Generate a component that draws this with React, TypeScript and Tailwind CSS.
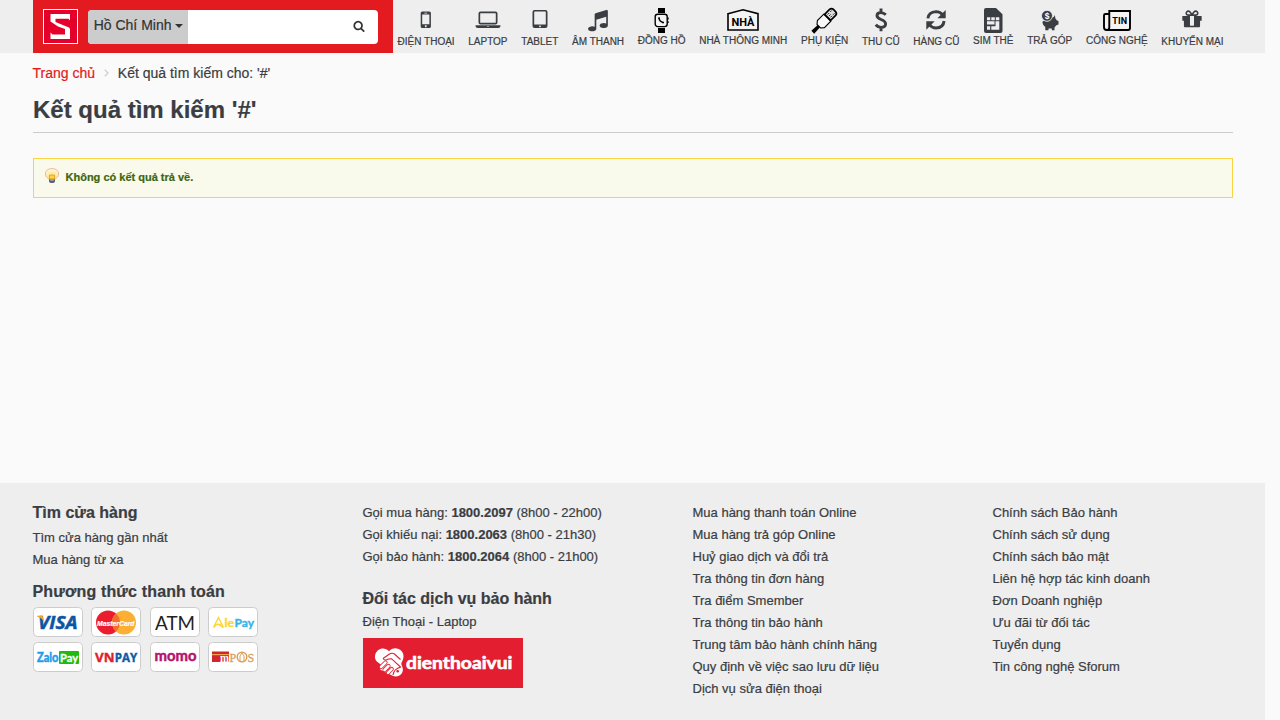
import type { ReactNode } from "react";

const SEARCH =
  "M1216 832q0-185-131.5-316.5t-316.5-131.5-316.5 131.5-131.5 316.5 131.5 316.5 316.5 131.5 316.5-131.5 131.5-316.5zm512 832q0 52-38 90t-90 38q-54 0-90-38l-343-342q-179 124-399 124-143 0-273.5-55.5t-225-150-150-225-55.5-273.5 55.5-273.5 150-225 225-150 273.5-55.5 273.5 55.5 225 150 150 225 55.5 273.5q0 220-124 399l343 343q37 37 37 90z";
const MUSIC =
  "M1664 224v1120q0 50-34 89t-86 60.5-103.5 32-96.5 10.5-96.5-10.5-103.5-32-86-60.5-34-89 34-89 86-60.5 103.5-32 96.5-10.5q105 0 192 39v-537l-768 237v709q0 50-34 89t-86 60.5-103.5 32-96.5 10.5-96.5-10.5-103.5-32-86-60.5-34-89 34-89 86-60.5 103.5-32 96.5-10.5q105 0 192 39v-967q0-31 19-56.5t49-35.5l832-256q12-4 28-4 40 0 68 28t28 68z";
const GIFT =
  "M1056 1356v-716h-320v716q0 25 18 38.5t46 13.5h192q28 0 46-13.5t18-38.5zm-456-844h195l-126-161q-26-31-69-31-40 0-68 28t-28 68 28 68 68 28zm688-96q0-40-28-68t-68-28q-43 0-69 31l-125 161h194q40 0 68-28t28-68zm376 256v320q0 14-9 23t-23 9h-96v416q0 40-28 68t-68 28h-1088q-40 0-68-28t-28-68v-416h-96q-14 0-23-9t-9-23v-320q0-14 9-23t23-9h440q-93 0-158.5-65.5t-65.5-158.5 65.5-158.5 158.5-65.5q107 0 168 77l128 165 128-165q61-77 168-77 93 0 158.5 65.5t65.5 158.5-65.5 158.5-158.5 65.5h440q14 0 23 9t9 23z";

function Draw({ w, children }: { w: number; children: ReactNode }) {
  return (
    <svg width={w} height="34" viewBox={`0 0 ${w} 34`} fill="#3a3d42" className="block shrink-0">
      {children}
    </svg>
  );
}

const phone = (
  <Draw w={12}>
    <path fillRule="evenodd" d="M2.3 11.5h7q1.6 0 1.6 1.6v13.3q0 1.6-1.6 1.6h-7Q.7 28 .7 26.400V13.100q0-1.600 1.600-1.600zM2.200 14.400v9.800h7.200v-9.800zM4.400 12.800v.6h2.800v-.6zM5.800 25.200a.95.95 0 1 0 .01 0z" />
  </Draw>
);
const laptop = (
  <Draw w={26}>
    <path fillRule="evenodd" d="M5.500 11.500h15q2 0 2 2v9q0 2-2 2h-15q-2 0-2-2v-9q0-2 2-2zM5.600 13.200q-.4 0-.4.4v8.800q0 .4.4.4h14.800q.4 0 .4-.4v-8.800q0-.4-.4-.4zM.6 25.300h24.800v1.200q0 1.400-2.200 1.400H2.800Q.6 27.900.6 26.500zM12 26v.6h2V26z" />
  </Draw>
);
const tablet = (
  <Draw w={16}>
    <path fillRule="evenodd" d="M2.500 10h11q2 0 2 2v14q0 2-2 2h-11q-2 0-2-2V12q0-2 2-2zM2.600 11.600q-.4 0-.4.4v12.200q0 .4.4.4h10.800q.4 0 .4-.4V12q0-.4-.4-.4zM8 25.400a.9.9 0 1 0 .01 0z" />
  </Draw>
);
const music = (
  <Draw w={22}>
    <path transform="translate(-.6 8.200) scale(.01290)" d={MUSIC} />
  </Draw>
);
const watch = (
  <Draw w={16}>
    <path fill="#000" d="M4 8h7v5H4zM4 28h7v5H4z" />
    <rect x="1.200" y="14.200" width="12" height="12.400" rx="2.500" fill="#f4f4f4" stroke="#000" strokeWidth="1.400" />
    <path fill="#000" d="M13.500 17.600h1.200v1.800h-1.200zM13.500 21.300h1.200v1.800h-1.200z" />
    <path d="M5 18.200q.4 3.500 4.300 4.400" fill="none" stroke="#000" strokeWidth="1.400" />
    <path d="M4.300 17.200h1.500v1.700H4.300zM8.300 21.800H10v1.400H8.300z" fill="#000" />
  </Draw>
);
const house = (
  <Draw w={32}>
    <path d="M1 13.700 16 9.800 31 13.700V30H1z" fill="#f4f4f4" stroke="#000" strokeWidth="1.600" />
    <text x="4.500" y="26" fill="#000" fontSize="11" fontWeight="700" fontFamily="Roboto" textLength="23">NHÀ</text>
  </Draw>
);
const plug = (
  <Draw w={28}>
    <g transform="translate(13.800 20.200) rotate(45)">
      <path d="M-1.600 8H1.600L2 17H-2z" fill="#000" />
      <path d="M-5-3.500H5V5.500L2.500 8.500H-2.500L-5 5.500z" fill="#f8f8f8" stroke="#000" strokeWidth="1.100" />
      <path d="M-4.300-4v-7Q-4-13.700-1.500-13.700H1.500Q4-13.700 4.300-11V-4z" fill="#ddd" stroke="#000" strokeWidth="1.700" />
      <path d="M-2-6v-2.200M0-6v-2.200M2-6v-2.200M-2-9.700v-2M2-9.700v-2" stroke="#222" strokeWidth=".9" />
    </g>
  </Draw>
);
const dollar = (
  <Draw w={14}>
    <path d="M11.800 14.700Q9.700 12.600 6.800 12.600 3 12.600 3 15.600q0 2.500 4 3.900 4.600 1.600 4.600 4.600 0 3.300-4.600 3.300-3.100 0-5.300-2.600M7 8.500V13M7 27v4.300" fill="none" stroke="#3a3d42" strokeWidth="2.900" />
  </Draw>
);
const refresh = (
  <Draw w={22}>
    <path d="M2.900 18.400Q3.600 11.900 11 11.600q4.200 0 7 3.600M19.100 21Q18.400 27.700 11 28q-4.200 0-7-3.600" fill="none" stroke="#3a3d42" strokeWidth="2.900" />
    <path d="M20.700 10v8.300h-8.300zM1.300 29.700v-8.400h8.400z" />
  </Draw>
);
const sim = (
  <Draw w={20}>
    <path d="M3 8h10L19.500 14.300V31q0 2-2 2H3q-2 0-2-2V10q0-2 2-2z" />
    <path fill="#eee" d="M4 17.300h3.300v3H4zM8.300 17.300h3.500v3H8.300zM12.800 17.300h3.500v3h-3.500zM4 21.300h7.500v3.200H4zM12.500 21.300h3.800v8.500h-8v-3.500h4.200zM4 26.300h3.200v3.500H4z" />
  </Draw>
);
const piggy = (
  <Draw w={18}>
    <path d="M1.500 21.500 10.500 17.800l2.500-1 .9-1.900.5 3.600 1.600 2 1.500.4v3.600l-2.100.8-1.900 2.300V30.300h-2.700v-1.700H7.500v1.700H4.300V27Q1.300 24.800 1.500 21.500z" />
    <circle cx="6" cy="15.800" r="5.500" stroke="#eee" strokeWidth=".9" />
    <text x="6" y="18.900" fill="#fff" fontSize="8.500" fontWeight="700" textAnchor="middle">$</text>
  </Draw>
);
const news = (
  <Draw w={30}>
    <path d="M7.300 14H3.500Q2 14 2 15.500v11.800Q2 30 4.600 30H26q2 0 2-2V11H7.300v16.500Q7.300 30 4.600 30" fill="#f4f4f4" stroke="#000" strokeWidth="1.900" />
    <text x="10.200" y="23.500" fill="#000" fontSize="9" fontWeight="700" fontFamily="Roboto" textLength="15">TIN</text>
  </Draw>
);
const gift = (
  <Draw w={22}>
    <path transform="translate(-.3 7.900) scale(.01260)" d={GIFT} />
  </Draw>
);

const nav: [string, ReactNode, string, boolean][] = [
  ["ĐIỆN THOẠI", phone, "w-[57px]", true],
  ["LAPTOP", laptop, "w-[39.4px]", true],
  ["TABLET", tablet, "w-[37.3px]", true],
  ["ÂM THANH", music, "w-[52px]", true],
  ["ĐỒNG HỒ", watch, "w-[47.800px]", false],
  ["NHÀ THÔNG MINH", house, "w-[88.400px]", false],
  ["PHỤ KIỆN", plug, "w-[47.300px]", false],
  ["THU CŨ", dollar, "w-[37.700px]", true],
  ["HÀNG CŨ", refresh, "w-[46.200px]", true],
  ["SIM THẺ", sim, "w-[40.600px]", false],
  ["TRẢ GÓP", piggy, "w-[45.200px]", false],
  ["CÔNG NGHỆ", news, "w-[61.700px]", false],
  ["KHUYẾN MẠI", gift, "w-[62.300px]", true],
];

function Brand() {
  return (
    <svg width="35" height="35" viewBox="0 0 35 35" className="mt-[9px] shrink-0">
      <rect x=".5" y=".5" width="34" height="34" fill="#e4002b" stroke="#fff" />
      <path fill="#fff" d="M7.500 5H27v6.500L25.500 9.700H12.500V13L26 18.500 27 20V30H7.500v-6.500L9.500 25.500H22V20L15 17.500 7.500 12.500z" />
    </svg>
  );
}

function Header() {
  return (
    <header className="flex h-[53px] w-[1265px] bg-[#eee] pl-[33px]">
      <div className="flex w-[360px] shrink-0 bg-[#e31b20] pl-[10px]">
        <Brand />
        <div className="mt-[10px] ml-[10px] flex h-[34px] w-[290px] overflow-hidden rounded-[4px] bg-white">
          <div className="flex w-[100px] items-center bg-[#ccc] pb-[3px] pl-[5.700px] text-[14px] whitespace-nowrap text-[#333]">
            Hồ Chí Minh
            <svg width="8" height="4" viewBox="0 0 8 4" className="mt-px ml-[3px] shrink-0">
              <path d="M0 0h8L4 4z" fill="#333" />
            </svg>
          </div>
          <svg width="12" height="12" viewBox="0 0 1792 1792" className="mt-[10px] ml-[165px]" fill="#333">
            <path d={SEARCH} />
          </svg>
        </div>
      </div>
      <nav className="flex gap-[13.600px] pl-[4.600px] text-[10px] leading-[14px] text-[#3a3d42]">
        {nav.map(([label, icon, width, low]) => (
          <a key={label} className={`flex flex-col items-center whitespace-nowrap ${width}`}>
            {icon}
            <span className={low ? "mt-px" : ""}>{label}</span>
          </a>
        ))}
      </nav>
    </header>
  );
}

const cards: ReactNode[] = [
  <g key="visa">
    <text x="5" y="21.500" fontSize="17.500" fontWeight="700" fontStyle="italic" fontFamily="Open Sans" fill="#0b56a4" stroke="#0b56a4" strokeWidth=".5" textLength="39.500" lengthAdjust="spacingAndGlyphs">VISA</text>
    <path d="M4 8.700h5.500l2 6Q8 10.500 4 9.500z" fill="#f9a51a" />
  </g>,
  <g key="mastercard">
    <circle cx="17" cy="15.500" r="12" fill="#eb1c2d" />
    <circle cx="33" cy="15.500" r="12" fill="#fbb034" />
    <path d="M25 6.600a12 12 0 0 1 0 17.800 12 12 0 0 1 0-17.800" fill="#f2702a" />
    <text x="6" y="18.700" fontSize="7.500" fontWeight="700" fontStyle="italic" fill="#fff" stroke="#fff" strokeWidth=".2" textLength="37.500" lengthAdjust="spacingAndGlyphs">MasterCard</text>
  </g>,
  <text key="atm" x="5" y="22.500" fontSize="19" fontFamily="Lato" fill="#222" textLength="40" lengthAdjust="spacingAndGlyphs">ATM</text>,
  <g key="alepay">
    <path d="M5.500 20.500 10.500 10.500 15.500 20.500M6 20.500q3-5 7-2.500M10 17l5 3.500" fill="none" stroke="#ffd534" strokeWidth="1.400" />
    <text x="16.500" y="20" fontSize="12" fontWeight="700" fontFamily="Lato" fill="#ffd534" stroke="#ffd534" strokeWidth=".4" textLength="9.500" lengthAdjust="spacingAndGlyphs">le</text>
    <text x="26.500" y="20" fontSize="12" fontWeight="700" fontFamily="Lato" fill="#35b5ea" stroke="#35b5ea" strokeWidth=".4" textLength="19.500" lengthAdjust="spacingAndGlyphs">Pay</text>
  </g>,
  <g key="zalopay">
    <rect x="26" y="9" width="20" height="13" rx="1" fill="#1fb90f" />
    <text x="4" y="20" fontSize="12.500" fontWeight="700" fontFamily="Lato" fill="#1b9dea" stroke="#1b9dea" strokeWidth=".5" textLength="21.500" lengthAdjust="spacingAndGlyphs">Zalo</text>
    <text x="27" y="19.500" fontSize="12" fontWeight="700" fontFamily="Lato" fill="#fff" stroke="#fff" strokeWidth=".3" textLength="18" lengthAdjust="spacingAndGlyphs">Pay</text>
  </g>,
  <g key="vnpay" fontSize="13" fontWeight="700" fontFamily="Open Sans" strokeWidth=".4">
    <text x="4" y="19.500" fill="#e11f2c" stroke="#e11f2c" textLength="19.500" lengthAdjust="spacingAndGlyphs">VN</text>
    <text x="23.800" y="19.500" fill="#0d5ba6" stroke="#0d5ba6" textLength="22.500" lengthAdjust="spacingAndGlyphs">PAY</text>
  </g>,
  <text key="momo" x="4.500" y="19" fontSize="15.500" fontWeight="700" fontFamily="Lato" fill="#b3146c" stroke="#b3146c" strokeWidth=".5" textLength="42" lengthAdjust="spacingAndGlyphs">momo</text>,
  <g key="mpos">
    <rect x="4" y="9.500" width="17" height="10.500" fill="#d3252e" />
    <path d="M4 12h17v1.200H4z" fill="#f0a24a" />
    <text x="12" y="19.800" fontSize="12.500" fontFamily="Liberation Serif" fontWeight="700" fill="#fff" textLength="9" lengthAdjust="spacingAndGlyphs">m</text>
    <text x="21.500" y="19.500" fontSize="12" fontFamily="Liberation Serif" fill="#d9a05b" stroke="#d9a05b" strokeWidth=".3">P</text>
    <circle cx="34" cy="15" r="4.800" fill="none" stroke="#d9a05b" strokeWidth="1.500" />
    <path d="M32 20v-6l2-3 2 3v6" fill="none" stroke="#d9a05b" />
    <text x="39.500" y="19.500" fontSize="12" fontFamily="Liberation Serif" fill="#d9a05b" stroke="#d9a05b" strokeWidth=".3">S</text>
  </g>,
];

function Partner() {
  return (
    <svg width="160" height="50" viewBox="0 0 160 50" className="mt-[5px]">
      <rect width="160" height="50" fill="#e31e30" />
      <path d="M26 13.200C29 9.500 35 9.200 38.500 13c2.800 3.200 2.500 7.500.3 11-.8 1.500-.5 2.500.4 4.500 1.500 3.500.5 7.500-3.200 9.200-4 2-6.500-.2-9.500-1.500L17 31.500 19 27.500 13.800 23.500C11 20.500 11.500 15 15 12.200 18.500 9.500 23 10 26 13.200z" fill="#fff" />
      <path d="M20 20.500 26.500 16q2.500-1.500 5 0l6 5.500M20 20.500q1.800 2.700 5.500.5l3-.3 9 8.300M30 37q.5-6 8-8" fill="none" stroke="#e31e30" strokeWidth="1.100" />
      <path d="m18 29 4.500-4.500M21.500 32l4-4M25 34.800l3.700-3.700" stroke="#e31e30" strokeWidth="4.200" strokeLinecap="round" />
      <path d="m18 29 4.500-4.500M21.500 32l4-4M25 34.800l3.700-3.700" stroke="#fff" strokeWidth="2.500" strokeLinecap="round" />
      <circle cx="34.700" cy="33.200" r="1.300" fill="#e31e30" />
      <text x="43" y="31" fontSize="17" fontWeight="700" fontFamily="Lato" fill="#fff" stroke="#fff" strokeWidth=".6" textLength="106.500" lengthAdjust="spacingAndGlyphs">dienthoaivui</text>
    </svg>
  );
}

function Bulb() {
  return (
    <svg width="16" height="16" viewBox="0 0 16 16" className="mt-[9px] shrink-0">
      <defs>
        <radialGradient id="glow" cx=".5" cy=".75" r=".75">
          <stop offset="0" stopColor="#ffd22e" />
          <stop offset=".45" stopColor="#ffeaa8" />
          <stop offset="1" stopColor="#fffaf4" />
        </radialGradient>
      </defs>
      <path d="M8 .6c4 0 6.600 2.300 6.600 5.400 0 2.700-2 3.800-3.400 5H4.800C3.400 9.800 1.400 8.700 1.400 6 1.400 2.900 4 .6 8 .6z" fill="url(#glow)" stroke="#e3a87c" strokeWidth=".8" />
      <path d="M5.500 7.200h5v3.600h-5z" fill="#ffd545" stroke="#e39a18" strokeWidth=".8" />
      <path d="M5 11.200h6v1.900q0 2-3 2t-3-2z" fill="#596273" />
      <path d="M6.200 12h3.600" stroke="#c6ccd6" />
    </svg>
  );
}

const calls = [
  ["Gọi mua hàng:", "1800.2097", "(8h00 - 22h00)"],
  ["Gọi khiếu nại:", "1800.2063", "(8h00 - 21h30)"],
  ["Gọi bảo hành:", "1800.2064", "(8h00 - 21h00)"],
];
const services = ["Mua hàng thanh toán Online", "Mua hàng trả góp Online", "Huỷ giao dịch và đổi trả", "Tra thông tin đơn hàng", "Tra điểm Smember", "Tra thông tin bảo hành", "Trung tâm bảo hành chính hãng", "Quy định về việc sao lưu dữ liệu", "Dịch vụ sửa điện thoại"];
const policies = ["Chính sách Bảo hành", "Chính sách sử dụng", "Chính sách bảo mật", "Liên hệ hợp tác kinh doanh", "Đơn Doanh nghiệp", "Ưu đãi từ đối tác", "Tuyển dụng", "Tin công nghệ Sforum"];

export default function App() {
  return (
    <div className="flex h-[720px] w-[1280px] flex-col overflow-hidden bg-[#fafafa] font-['Liberation_Sans',sans-serif] text-[#3a3d42] [-webkit-text-stroke:0.200px]">
      <Header />
      <main className="ml-[32.500px] h-[430px] w-[1200.500px]">
        <div className="flex items-center pt-[10px] text-[14px] leading-[20px]">
          <a className="text-[#e31b20]">Trang chủ</a>
          <svg width="5" height="8" viewBox="0 0 5 8" className="mx-[8.900px]">
            <path d="m.7.700 3.300 3.300L.7 7.300" fill="none" stroke="#ccc" strokeWidth="1.200" />
          </svg>
          <span>Kết quả tìm kiếm cho: '#'</span>
        </div>
        <h1 className="mt-[9px] ml-[.5px] h-[41px] border-b border-[#ccc] pt-px text-[24px] leading-[34px] font-bold">Kết quả tìm kiếm '#'</h1>
        <div className="mt-[25px] ml-[.5px] flex h-[40px] border border-[#fcd344] bg-[#fafaec] pl-[10px]">
          <Bulb />
          <p className="ml-[5.500px] text-[11px] leading-[37px] font-bold text-[#3d6611]">Không có kết quả trả về.</p>
        </div>
      </main>
      <footer className="flex h-[237px] w-[1265px] bg-[#eee] pt-[19px] pl-[32.500px] text-[13px] leading-[22px]">
        <section className="w-[330px]">
          <h2 className="text-[16px] font-bold">Tìm cửa hàng</h2>
          <p className="mt-[3px]">Tìm cửa hàng gần nhất</p>
          <p>Mua hàng từ xa</p>
          <h2 className="mt-[10px] text-[16px] font-bold tracking-[.15px]">Phương thức thanh toán</h2>
          <div className="mt-[4px] ml-[.5px] grid w-fit grid-cols-4 gap-x-[8.330px] gap-y-[5px]">
            {cards.map((card, i) => (
              <svg key={i} width="50" height="30" viewBox="0 0 50 30">
                <rect x=".5" y=".5" width="49" height="29" rx="4" fill="#fff" stroke="#ccc" />
                {card}
              </svg>
            ))}
          </div>
        </section>
        <section className="w-[330px]">
          {calls.map(([label, number, hours]) => (
            <p key={number}>
              {label} <b>{number}</b> {hours}
            </p>
          ))}
          <h2 className="mt-[20px] text-[16px] font-bold">Đối tác dịch vụ bảo hành</h2>
          <p className="mt-px">Điện Thoại - Laptop</p>
          <div className="pl-[.5px]">
            <Partner />
          </div>
        </section>
        <section className="w-[300px]">
          {services.map((item) => (
            <p key={item}>{item}</p>
          ))}
        </section>
        <section>
          {policies.map((item) => (
            <p key={item}>{item}</p>
          ))}
        </section>
      </footer>
    </div>
  );
}
